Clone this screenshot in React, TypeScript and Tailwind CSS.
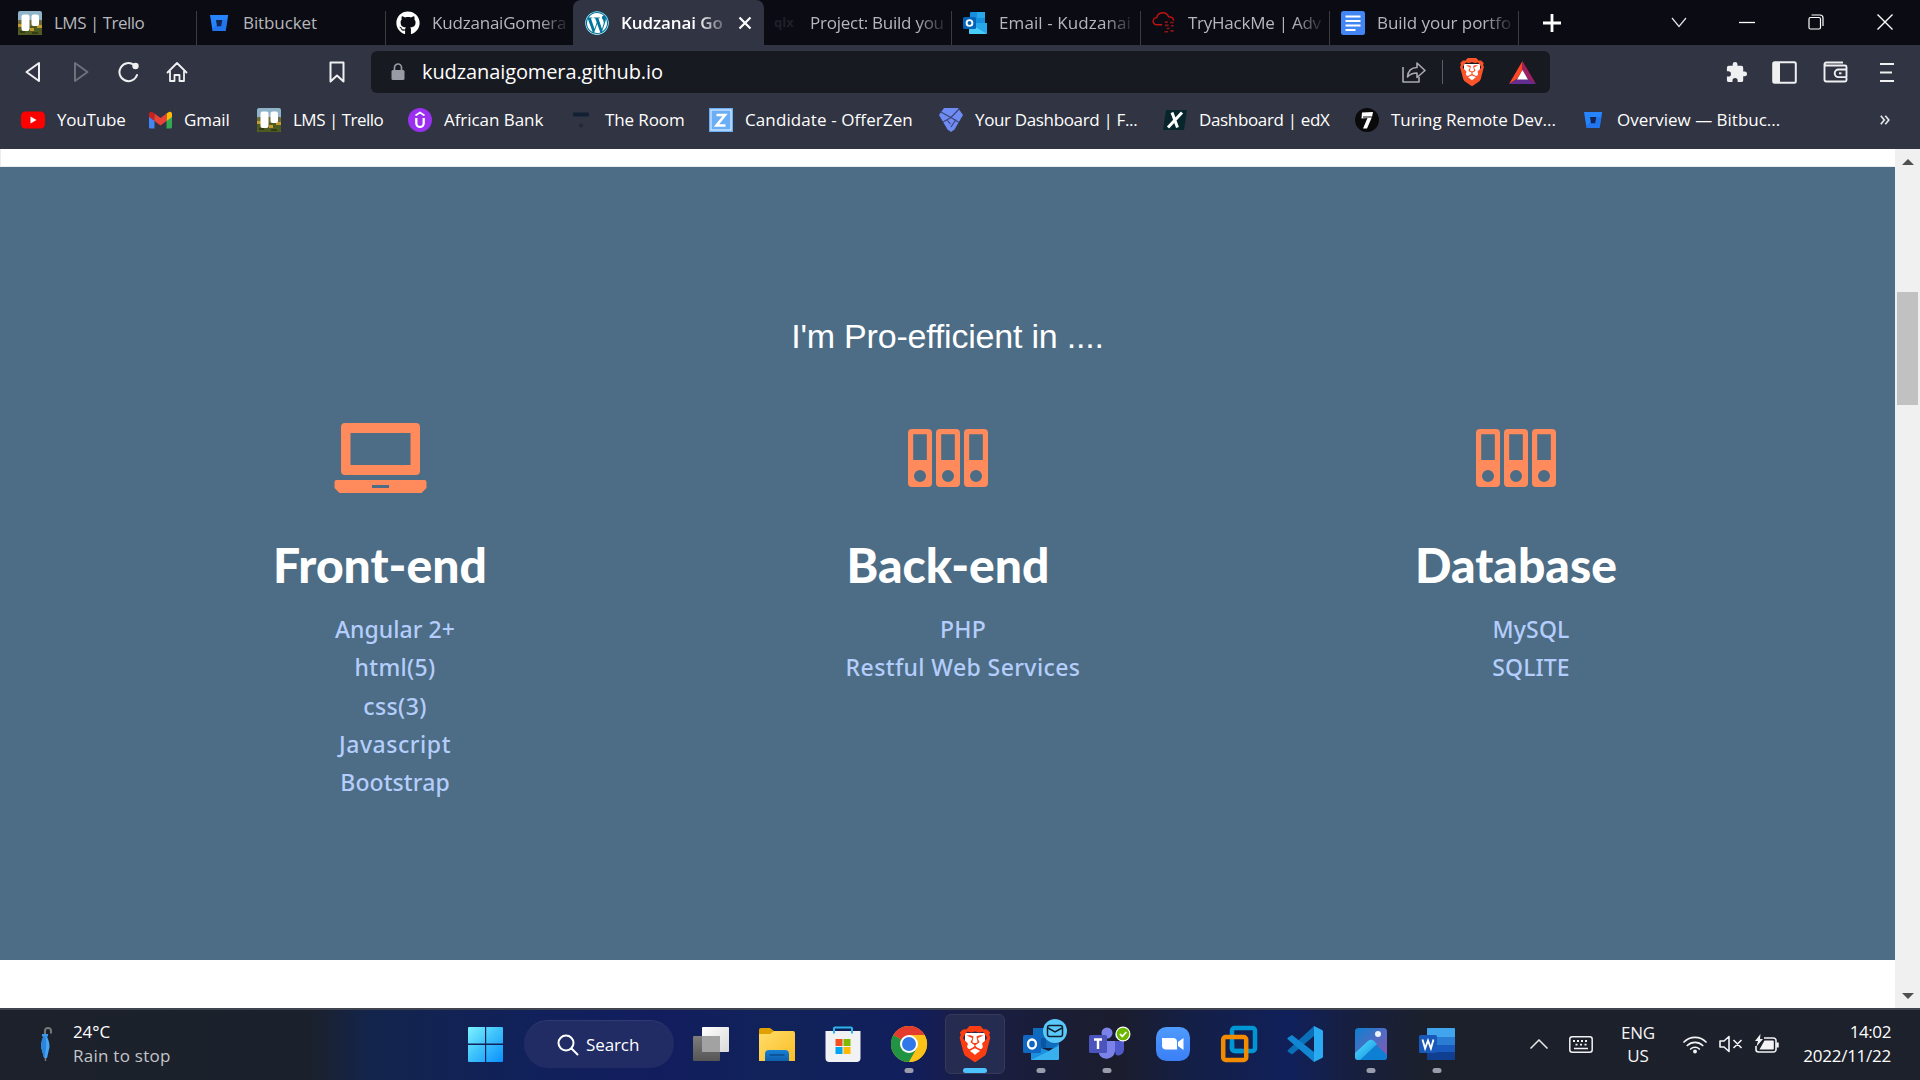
import type { ReactNode } from 'react';
import { FaGithub, FaWordpress } from 'react-icons/fa';
import { SiBrave } from 'react-icons/si';

/* ---------- site icons ---------- */

function TrelloIcon() {
  return (
    <svg width="24" height="24" viewBox="0 0 24 24">
      <rect width="24" height="24" rx="2" fill="#8fb3c8" />
      <rect y="9" width="24" height="15" rx="1" fill="#6d6a35" />
      <rect y="15" width="24" height="9" rx="2" fill="#4f5a20" />
      <path d="M0 13h5v3H0zM12 17h4v3h-4zM19 14h5v3h-5z" fill="#c49a2c" />
      <path d="M2 20h5v2H2zM14 21h6v2h-6z" fill="#313d14" />
      <rect x="3.5" y="3.5" width="8" height="16.5" rx="2" fill="#fff" />
      <rect x="13.5" y="3.5" width="7.5" height="11.5" rx="2" fill="#fff" />
    </svg>
  );
}

function BitbucketIcon() {
  return (
    <svg width="24" height="24" viewBox="0 0 24 24">
      <path d="M3 4h18.2L18.6 20H5.6z" fill="#2684ff" />
      <path d="M15 9h5.4l-1.8 11H5.6l.6-3z" fill="#1f6fe8" opacity=".7" />
      <path d="M9 9h6.2l-1 6.2H10z" fill="#12244f" />
    </svg>
  );
}

function OutlookTabIcon() {
  return (
    <svg width="24" height="24" viewBox="0 0 24 24">
      <rect x="7" y="1" width="15" height="12" rx="1" fill="#1490df" />
      <rect x="14" y="1" width="8" height="6" fill="#28a8ea" />
      <path d="M6 12h18v10a1 1 0 0 1-1 1H7a1 1 0 0 1-1-1z" fill="#28a8ea" />
      <path d="M6 12l18 11H7a1 1 0 0 1-1-1z" fill="#50d9ff" opacity=".75" />
      <rect y="6" width="13" height="12" rx="1.5" fill="#0364b8" />
      <circle cx="6.5" cy="12" r="2.9" fill="none" stroke="#fff" strokeWidth="1.9" />
    </svg>
  );
}

function TryHackMeIcon() {
  return (
    <svg width="26" height="24" viewBox="0 0 26 24" fill="none" stroke="#c11111" strokeWidth="1.6">
      <path d="M11 14H5.5a4 4 0 0 1-.4-8C6 3 9 .9 12 1c3 .1 5 1.8 6 4.200 3 0 5.200 1.600 5.500 4.200" />
      <path d="M14 11h3M19.500 11.500h4M14 14.500h4M20.500 15h3M16 18h3M13.500 21.500h4M20 20.500h3.500" stroke="#8f1414" strokeWidth="1.800" />
    </svg>
  );
}

function DocsIcon() {
  return (
    <svg width="24" height="24" viewBox="0 0 24 24">
      <rect width="24" height="24" rx="2.500" fill="#4285f4" />
      <path d="M4.500 5.500h15M4.500 10h15M4.500 14.500h15M4.500 19h10" stroke="#fff" strokeWidth="2" />
    </svg>
  );
}

function YouTubeIcon() {
  return (
    <svg width="24" height="24" viewBox="0 0 24 24">
      <rect x="0" y="3.500" width="24" height="17" rx="4.500" fill="#f00" />
      <path d="M9.500 8.500v7l6-3.500z" fill="#fff" />
    </svg>
  );
}

function GmailIcon() {
  return (
    <svg width="23" height="24" viewBox="0 0 23 24" className="ml-px">
      <path d="M0 6.500L5.500 10v10.500H1.500A1.500 1.500 0 0 1 0 19z" fill="#4285f4" />
      <path d="M23 6.500L17.500 10v10.500h4A1.500 1.500 0 0 0 23 19z" fill="#34a853" />
      <path d="M17.500 5.500l2-1.300C21 3.200 23 4 23 6v3l-5.500 4z" fill="#fbbc04" />
      <path d="M5.500 5.500l-2-1.300C2 3.200 0 4 0 6v3l5.500 4z" fill="#c5221f" />
      <path d="M5.500 5.500l6 4.500 6-4.500V13l-6 4.500-6-4.500z" fill="#ea4335" />
    </svg>
  );
}

function AfricanBankIcon() {
  return (
    <svg width="24" height="24" viewBox="0 0 24 24">
      <circle cx="12" cy="12" r="12" fill="#9b30f0" />
      <path d="M8.300 10v5.200a3.700 3.700 0 0 0 7.400 0V10" fill="none" stroke="#fff" strokeWidth="2.300" />
      <path d="M7.500 7.500L12 4.500l4.500 3" fill="none" stroke="#fff" strokeWidth="1.800" />
    </svg>
  );
}

function TheRoomIcon() {
  return (
    <svg width="24" height="24" viewBox="0 0 24 24">
      <rect x="4" y="4.500" width="16" height="4" rx="1" fill="#132033" />
      <circle cx="12" cy="17.500" r="2" fill="#1c2a3c" />
    </svg>
  );
}

function OfferZenIcon() {
  return (
    <svg width="24" height="24" viewBox="0 0 24 24">
      <rect width="24" height="24" fill="#6aaef5" />
      <rect x="2" y="2" width="20" height="20" fill="none" stroke="#d9ebff" strokeWidth="1.200" />
      <path d="M7.500 7h8.500l-8.500 10.500h9" fill="none" stroke="#fff" strokeWidth="2.600" />
    </svg>
  );
}

function DiamondIcon() {
  return (
    <svg width="24" height="24" viewBox="0 0 24 24">
      <path d="M5 0h14l5 7-8.500 14.500L12 24l-3.500-2.500L0 7z" fill="#6f8cf5" />
      <path d="M1 3.500l11 6 8.500-9M12 9.500L4 14M12 9.500l8 5M12 19l5-7.500M8 12l3.500 4" fill="none" stroke="#3c4372" strokeWidth="1.100" />
    </svg>
  );
}

function EdxIcon() {
  return (
    <svg width="24" height="24" viewBox="0 0 24 24">
      <path d="M3 2h21l-3 20H0z" fill="#06262b" />
      <path d="M9 4.500l5.500 15M19 4.500L5 19.500" stroke="#fff" strokeWidth="3" />
    </svg>
  );
}

function TuringIcon() {
  return (
    <svg width="24" height="24" viewBox="0 0 24 24">
      <circle cx="12" cy="12" r="12" fill="#0a0a0a" />
      <path d="M7 4.500l11-.5-1 5-5 11.500H8l4.500-10.500-6 .5z" fill="#fff" />
      <path d="M8 9h9" stroke="#0a0a0a" strokeWidth="1" />
    </svg>
  );
}

function BraveLion({ size, className }: { size: number; className: string }) {
  return (
    <span className={`relative flex items-center justify-center ${className}`}>
      <span className="absolute inset-x-[22%] top-[20%] bottom-[18%] rounded-b-full bg-white" />
      <SiBrave size={size} className="relative" />
    </span>
  );
}

/* ---------- browser chrome ---------- */

type Tab = { title: string; icon: ReactNode; width: string; pad: string; tracking: string; fade?: boolean; divider?: boolean };

const leftTabs: Tab[] = [
  { title: 'LMS | Trello', icon: <TrelloIcon />, width: 'w-[197px]', pad: 'pl-[18px]', tracking: 'tracking-[-0.5px]', divider: true },
  { title: 'Bitbucket', icon: <BitbucketIcon />, width: 'w-[189px]', pad: 'pl-[10px]', tracking: 'tracking-[-0.1px]', divider: true },
  { title: 'KudzanaiGomera', icon: <FaGithub size={24} color="#fff" />, width: 'w-[187px]', pad: 'pl-[10px]', tracking: 'tracking-[-0.2px]', fade: true },
];

const rightTabs: Tab[] = [
  {
    title: 'Project: Build you',
    icon: <span className="w-6 text-[13px] font-bold text-[#1c2129]">qlx</span>,
    width: 'w-[188px]', pad: 'pl-[10px]', tracking: 'tracking-[-0.25px]', fade: true, divider: true,
  },
  { title: 'Email - Kudzanai', icon: <OutlookTabIcon />, width: 'w-[189px]', pad: 'pl-[11px]', tracking: 'tracking-[0.1px]', fade: true, divider: true },
  { title: 'TryHackMe | Adv', icon: <TryHackMeIcon />, width: 'w-[189px]', pad: 'pl-[11px]', tracking: 'tracking-[-0.25px]', fade: true, divider: true },
  { title: 'Build your portfo', icon: <DocsIcon />, width: 'w-[189px]', pad: 'pl-[11px]', tracking: 'tracking-[-0.05px]', fade: true, divider: true },
];

function TabItem({ tab }: { tab: Tab }) {
  return (
    <div className={`flex h-full shrink-0 ${tab.width}`}>
      <div className={`flex min-w-0 flex-1 items-center gap-3 ${tab.pad}`}>
        <span className="flex w-6 shrink-0 justify-center">{tab.icon}</span>
        <span
          className={`whitespace-nowrap text-[17px] leading-6 text-[#b6b7bb] ${tab.tracking} ${
            tab.fade ? '[mask-image:linear-gradient(to_right,black_80%,rgba(0,0,0,0.15)_100%)]' : ''
          }`}
        >
          {tab.title}
        </span>
      </div>
      {tab.divider && <div className="mt-[11px] w-px bg-[#3b3c42]" />}
    </div>
  );
}

function TabStrip() {
  return (
    <div className="flex h-[45px] bg-[#0b0b14]">
      {leftTabs.map((t) => <TabItem key={t.title} tab={t} />)}
      <div className="flex h-full w-[191px] shrink-0 items-center rounded-t-lg bg-[#313442] pl-3">
        <span className="rounded-full bg-[#00749c]"><FaWordpress size={24} color="#fff" /></span>
        <span className="ml-3 w-[106px] whitespace-nowrap text-[17px] font-semibold leading-6 tracking-[-0.1px] text-white [mask-image:linear-gradient(to_right,black_72%,rgba(0,0,0,0.15)_100%)]">
          Kudzanai Go
        </span>
        <svg width="14" height="14" viewBox="0 0 14 14" className="ml-[11px]">
          <path d="M1.500 1.500l11 11M12.500 1.500l-11 11" stroke="#fff" strokeWidth="2.200" />
        </svg>
      </div>
      {rightTabs.map((t) => <TabItem key={t.title} tab={t} />)}
      <div className="flex flex-1 items-center pl-[24px]">
        <svg width="18" height="18" viewBox="0 0 18 18"><path d="M9 0v18M0 9h18" stroke="#fff" strokeWidth="2.800" /></svg>
        <svg width="16" height="11" viewBox="0 0 16 11" className="ml-[110px] -mt-px" fill="none" stroke="#e4e4e6" strokeWidth="1.200"><path d="M1 1l7 8.500L15 1" /></svg>
        <svg width="16" height="3" viewBox="0 0 16 3" className="ml-[52px] -mt-px"><path d="M0 1.500h16" stroke="#fff" strokeWidth="1.300" /></svg>
        <svg width="16" height="16" viewBox="0 0 16 16" className="ml-[53px] -mt-px" fill="none" stroke="#fff" strokeWidth="1.200">
          <rect x="1" y="3.500" width="11.500" height="11.500" rx="1.500" /><path d="M3.500 1h8.500a3 3 0 0 1 3 3v8" />
        </svg>
        <svg width="16" height="16" viewBox="0 0 16 16" className="ml-[53px] -mt-px"><path d="M.5.500l15 15M15.500.500l-15 15" stroke="#fff" strokeWidth="1.400" /></svg>
      </div>
    </div>
  );
}

function Toolbar() {
  return (
    <div className="flex h-[54px] items-center">
      <div className="flex w-[371px] shrink-0 items-center pl-[9px]">
        <span className="flex w-12 justify-center">
          <svg width="18" height="22" viewBox="0 0 18 22" fill="none" stroke="#f0f0f2" strokeWidth="2" strokeLinejoin="round"><path d="M15 2v18L2.500 11z" /></svg>
        </span>
        <span className="flex w-12 justify-center">
          <svg width="18" height="22" viewBox="0 0 18 22" fill="none" stroke="#6e707b" strokeWidth="2" strokeLinejoin="round"><path d="M3 2v18l12.500-9z" /></svg>
        </span>
        <span className="flex w-12 justify-center">
          <svg width="22" height="22" viewBox="0 0 22 22" fill="none" stroke="#f0f0f2" strokeWidth="2" strokeLinecap="round">
            <path d="M19 14a9 9 0 1 1-3-10" /><circle cx="17.500" cy="5" r="3.200" fill="#f0f0f2" stroke="none" />
          </svg>
        </span>
        <span className="flex w-12 justify-center">
          <svg width="22" height="22" viewBox="0 0 22 22" fill="none" stroke="#f0f0f2" strokeWidth="1.800" strokeLinejoin="round" strokeLinecap="round">
            <path d="M1.500 11.500L11 2l9.500 9.500M4 10v10h4.500v-6h5v6H18V10" />
          </svg>
        </span>
        <svg width="16" height="22" viewBox="0 0 16 22" className="ml-[128px]" fill="none" stroke="#f0f0f2" strokeWidth="2" strokeLinejoin="round">
          <path d="M1.500 1.500h13v19L8 14.500l-6.500 6z" />
        </svg>
      </div>
      <div className="flex h-[42px] w-[1179px] shrink-0 items-center rounded-md bg-[#181a21] pl-[20px]">
        <svg width="14" height="18" viewBox="0 0 14 18"><rect x=".5" y="7" width="13" height="10" rx="1.500" fill="#989ba3" /><path d="M3.500 7V4.500a3.500 3.500 0 0 1 7 0V7" fill="none" stroke="#989ba3" strokeWidth="1.700" /></svg>
        <span className="ml-[17px] flex-1 text-[20px] leading-7 tracking-[-0.1px] text-white">kudzanaigomera.github.io</span>
        <svg width="24" height="22" viewBox="0 0 24 22" fill="none" stroke="#a9aab0" strokeWidth="1.600" strokeLinejoin="round">
          <path d="M1 6v15h16v-5" /><path d="M5.500 16c.5-6 4-9.500 9.500-9.500V2l8 7.500-8 7v-4.500c-4 0-7 1-9.500 4z" />
        </svg>
        <div className="ml-[16px] h-6 w-[1.500px] bg-[#5c5e67]" />
        <BraveLion size={28} className="ml-[15px] h-7 w-7 text-[#fb542b]" />
        <svg width="27" height="23" viewBox="0 0 27 23" className="mr-[14px] ml-[23px]">
          <path d="M13.500 0L0 23l8-5 5.500-9z" fill="#ff4724" /><path d="M13.500 0L27 23l-8-5-5.500-9z" fill="#9e1f63" /><path d="M0 23h27l-8-5H8z" fill="#662d91" /><path d="M13.500 9L8 18.500h11z" fill="#fff" />
        </svg>
      </div>
      <div className="flex flex-1 items-center pl-[175px]">
        <svg width="23" height="23" viewBox="0 0 24 24" fill="#f0f0f2">
          <path d="M20.500 11H19V7a2 2 0 0 0-2-2h-4V3.500a2.500 2.500 0 0 0-5 0V5H4a2 2 0 0 0-2 2v3.800h1.500a2.700 2.700 0 0 1 0 5.400H2V20a2 2 0 0 0 2 2h3.800v-1.500a2.700 2.700 0 0 1 5.400 0V22H17a2 2 0 0 0 2-2v-4h1.500a2.500 2.500 0 0 0 0-5z" />
        </svg>
        <svg width="25" height="23" viewBox="0 0 25 23" className="ml-[24px]"><rect x="1.200" y="1.200" width="22.600" height="20.600" rx="1.500" fill="none" stroke="#f0f0f2" strokeWidth="2" /><path d="M2 2h6v19H2z" fill="#f0f0f2" /></svg>
        <svg width="25" height="22" viewBox="0 0 25 22" className="ml-[26px]" fill="none" stroke="#f0f0f2" strokeWidth="1.900" strokeLinejoin="round">
          <path d="M23.500 8V6a1.500 1.500 0 0 0-1.500-1.500H3.500a2 2 0 0 1-2-1.500 2 2 0 0 1 2-1.500H20M1.500 3v15.500A2 2 0 0 0 3.500 20.500H22a1.500 1.500 0 0 0 1.500-1.500v-2" />
          <path d="M23.500 8.500h-8a3.800 3.800 0 0 0 0 7.600h8z" /><path d="M16 12.300h2.500" />
        </svg>
        <svg width="14" height="21" viewBox="0 0 14 21" className="ml-[32px]"><path d="M0 2h14M0 10.500h12M0 19h14" stroke="#f0f0f2" strokeWidth="2" /></svg>
      </div>
    </div>
  );
}

const bookmarks = [
  { label: 'YouTube', icon: <YouTubeIcon />, width: 'w-[127px]', tracking: 'tracking-[-0.2px]' },
  { label: 'Gmail', icon: <GmailIcon />, width: 'w-[109px]', tracking: 'tracking-[-0.1px]' },
  { label: 'LMS | Trello', icon: <TrelloIcon />, width: 'w-[151px]', tracking: 'tracking-[-0.5px]' },
  { label: 'African Bank', icon: <AfricanBankIcon />, width: 'w-[161px]', tracking: 'tracking-[-0.05px]' },
  { label: 'The Room', icon: <TheRoomIcon />, width: 'w-[140px]', tracking: 'tracking-[-0.1px]' },
  { label: 'Candidate - OfferZen', icon: <OfferZenIcon />, width: 'w-[230px]', tracking: 'tracking-[0.1px]' },
  { label: 'Your Dashboard | F...', icon: <DiamondIcon />, width: 'w-[224px]', tracking: 'tracking-[-0.35px]' },
  { label: 'Dashboard | edX', icon: <EdxIcon />, width: 'w-[192px]', tracking: 'tracking-[-0.35px]' },
  { label: 'Turing Remote Dev...', icon: <TuringIcon />, width: 'w-[226px]', tracking: 'tracking-normal' },
  { label: 'Overview — Bitbuc...', icon: <BitbucketIcon />, width: 'w-[220px]', tracking: 'tracking-normal' },
];

function BookmarksBar() {
  return (
    <div className="flex h-[50px] items-center pb-2 pl-[21px]">
      {bookmarks.map((b) => (
        <div key={b.label} className={`flex shrink-0 items-center gap-3 whitespace-nowrap ${b.width}`}>
          <span className="flex w-6 shrink-0">{b.icon}</span>
          <span className={`text-[17px] leading-6 text-white ${b.tracking}`}>{b.label}</span>
        </div>
      ))}
      <svg width="10" height="10" viewBox="0 0 10 10" className="mr-[30px] ml-auto" fill="none" stroke="#e6e6ea" strokeWidth="1.700">
        <path d="M.8.800L4.300 5 .8 9.200M5.300.800L8.800 5l-3.500 4.200" />
      </svg>
    </div>
  );
}

/* ---------- page ---------- */

function LaptopIcon() {
  return (
    <svg width="93" height="70" viewBox="0 0 93 70" fill="#ff8a5b">
      <path fillRule="evenodd" d="M11 0h71a4 4 0 0 1 4 4v44a4 4 0 0 1-4 4H11a4 4 0 0 1-4-4V4a4 4 0 0 1 4-4zM16.500 10v32h60V10z" />
      <path fillRule="evenodd" d="M2.500 57h88a2 2 0 0 1 2 2v6l-5 5h-82l-5-5v-6a2 2 0 0 1 2-2zM38 62v3h17v-3z" />
    </svg>
  );
}

const binder =
  'M4 0h16a4 4 0 0 1 4 4v50a4 4 0 0 1-4 4H4a4 4 0 0 1-4-4V4a4 4 0 0 1 4-4zM5.200 5.200V31h13.600V5.200zM12 41a6 6 0 1 0 0 12a6 6 0 1 0 0-12z';

function BindersIcon() {
  return (
    <svg width="80" height="58" viewBox="0 0 80 58" fill="#ff8a5b" fillRule="evenodd">
      <path d={binder} />
      <path d={binder} transform="translate(28 0)" />
      <path d={binder} transform="translate(56 0)" />
    </svg>
  );
}

type Skill = { name: string; tracking: string };

const groups: { title: string; icon: ReactNode; skills: Skill[] }[] = [
  {
    title: 'Front-end',
    icon: <LaptopIcon />,
    skills: [
      { name: 'Angular 2+', tracking: 'tracking-[0.05px]' },
      { name: 'html(5)', tracking: 'tracking-[0.3px]' },
      { name: 'css(3)', tracking: 'tracking-[0.4px]' },
      { name: 'Javascript', tracking: 'tracking-[0.55px]' },
      { name: 'Bootstrap', tracking: 'tracking-[0.1px]' },
    ],
  },
  {
    title: 'Back-end',
    icon: <BindersIcon />,
    skills: [
      { name: 'PHP', tracking: 'tracking-[0.3px]' },
      { name: 'Restful Web Services', tracking: 'tracking-[0.4px]' },
    ],
  },
  {
    title: 'Database',
    icon: <BindersIcon />,
    skills: [
      { name: 'MySQL', tracking: 'tracking-[0.2px]' },
      { name: 'SQLITE', tracking: 'tracking-[0.1px]' },
    ],
  },
];

function Page() {
  return (
    <main className="flex h-[859px] bg-white">
      <div className="flex flex-1 flex-col">
        <div className="h-[18px] border-b border-l border-[#ececec]" />
        <section className="h-[793px] bg-[#4c6d85] pt-[149px]">
          <h2 className="text-center font-['Liberation_Sans',sans-serif] text-[34px] leading-10 tracking-[-0.2px] text-white">
            I'm Pro-efficient in ....
          </h2>
          <div className="mr-[95px] ml-[96px] mt-[57px] grid grid-cols-3 text-center">
            {groups.map((g) => (
              <div key={g.title}>
                <div className="flex h-[90px] items-center justify-center">{g.icon}</div>
                <h3 className="mt-[33px] font-['Lato',sans-serif] text-[48px] font-black leading-[58px] text-white">{g.title}</h3>
                <ul className="mt-[16px] pl-[30px]">
                  {g.skills.map((s) => (
                    <li key={s.name} className={`font-['Noto_Sans',sans-serif] text-[23px] font-medium leading-[38.3px] text-[#b5cdfc] ${s.tracking}`}>
                      {s.name}
                    </li>
                  ))}
                </ul>
              </div>
            ))}
          </div>
        </section>
      </div>
      <div className="flex w-[25px] flex-col items-center bg-[#f0f0f0]">
        <svg width="12" height="6" viewBox="0 0 12 6" className="mt-[10px]"><path d="M0 6l6-6 6 6z" fill="#505050" /></svg>
        <div className="mt-[127px] h-[113px] w-[21px] bg-[#c1c1c1]" />
        <svg width="12" height="6" viewBox="0 0 12 6" className="mt-auto mb-[9px]"><path d="M0 0l6 6 6-6z" fill="#505050" /></svg>
      </div>
    </main>
  );
}

/* ---------- taskbar ---------- */

function Dot() {
  return <rect x="28.500" y="58" width="9" height="5" rx="2.500" fill="#9a9cac" />;
}

function Slot({ children }: { children: ReactNode }) {
  return <svg width="66" height="68" viewBox="0 0 66 68" className="shrink-0">{children}</svg>;
}

function TaskbarApps() {
  return (
    <div className="flex">
      <Slot>
        <defs>
          <linearGradient id="tv1" x2="1" y2="1"><stop stopColor="#fff" /><stop offset="1" stopColor="#d9d9d9" /></linearGradient>
          <linearGradient id="tv2" x2="0" y2="1"><stop stopColor="#7d7d7d" /><stop offset="1" stopColor="#555" /></linearGradient>
        </defs>
        <rect x="24" y="17" width="27" height="25" rx="1" fill="url(#tv1)" />
        <rect x="15" y="26" width="27" height="25" rx="1" fill="url(#tv2)" />
        <path d="M24 26h18v16H24z" fill="#a2a2a2" />
      </Slot>
      <Slot>
        <defs>
          <linearGradient id="fe" x2="1" y2="1"><stop stopColor="#ffdd6b" /><stop offset="1" stopColor="#fbbd25" /></linearGradient>
          <linearGradient id="fb" x2="0" y2="1"><stop stopColor="#1681d6" /><stop offset="1" stopColor="#0f5fae" /></linearGradient>
        </defs>
        <path d="M15 20a2 2 0 0 1 2-2h9l4 3-2 5H15z" fill="#dfa000" />
        <path d="M15 24h11l4-3h19a2 2 0 0 1 2 2v28H15z" fill="url(#fe)" />
        <path d="M21 51v-7a4 4 0 0 1 4-4h16a4 4 0 0 1 4 4v7z" fill="url(#fb)" />
        <path d="M26 45h14" stroke="#0c4c8c" strokeWidth="1.500" strokeLinecap="round" />
      </Slot>
      <Slot>
        <path d="M24 23v-4.500a.9.900 0 0 1 .9-.9h16.200a.9.900 0 0 1 .9.900V23" fill="none" stroke="#2cb5ea" strokeWidth="2" />
        <path d="M15.500 21h35v27a4 4 0 0 1-4 4h-27a4 4 0 0 1-4-4z" fill="#f1f2f4" />
        <path d="M24 21v2.500M42 21v2.500" stroke="#2cb5ea" strokeWidth="2" />
        <path d="M25.500 29h7v7h-7z" fill="#f25022" /><path d="M33.500 29h7v7h-7z" fill="#7fba00" />
        <path d="M25.500 37h7v7h-7z" fill="#00a4ef" /><path d="M33.500 37h7v7h-7z" fill="#ffb900" />
      </Slot>
      <Slot>
        <circle cx="33" cy="34" r="18" fill="#fbc116" />
        <path d="M33 34L17.400 25a18 18 0 0 1 31.200 0z" fill="#e33b2e" />
        <path d="M33 34l7.800 4.500L33 52A18 18 0 0 1 17.400 25z" fill="#229342" />
        <path d="M33 25h15.600A18 18 0 0 1 33 52l7.800-13.500z" fill="#fbc116" />
        <circle cx="33" cy="34" r="9" fill="#fff" /><circle cx="33" cy="34" r="7" fill="#3077ea" />
        <Dot />
      </Slot>
      <div className="flex w-[66px] items-start justify-center pt-1">
        <div className="flex h-[60px] w-[60px] flex-col items-center rounded-md border border-[#353a5c] bg-[#262b50]">
          <BraveLion size={36} className="mt-[11px] h-9 w-9 text-[#fb3d14]" />
          <div className="mt-[6px] h-[5px] w-6 rounded-full bg-[#4cc2ff]" />
        </div>
      </div>
      <Slot>
        <path d="M25 18h26v20H25z" fill="#0f6cbd" /><path d="M38 18h13v10H38z" fill="#28a8ea" />
        <path d="M25 28h13v10H25z" fill="#0a56a0" />
        <path d="M23 34l18 7 10-7v14a2 2 0 0 1-2 2H23z" fill="#1b8fe0" /><path d="M23 50l28-14v13l-1 1z" fill="#38b0ee" />
        <rect x="15" y="25" width="18" height="18" rx="1.500" fill="#1066c0" />
        <ellipse cx="24" cy="34" rx="4" ry="4.500" fill="none" stroke="#fff" strokeWidth="2.300" />
        <circle cx="47" cy="21" r="12" fill="#5ac8fa" />
        <rect x="39.500" y="15.500" width="15" height="11" rx="2" fill="none" stroke="#10202c" strokeWidth="1.500" />
        <path d="M40 18l7 4 7-4" fill="none" stroke="#10202c" strokeWidth="1.500" />
        <Dot />
      </Slot>
      <Slot>
        <circle cx="33" cy="23" r="5.500" fill="#7b83eb" /><circle cx="45" cy="25" r="4" fill="#5059c9" />
        <path d="M38 31h12v9a6 6 0 0 1-8 5z" fill="#5059c9" />
        <path d="M25 31h16v10a8.500 8.500 0 0 1-16 3z" fill="#7b83eb" />
        <rect x="15" y="25" width="18" height="18" rx="1.500" fill="#4b53bc" />
        <path d="M20 29.500h8M24 29.500v9.500" stroke="#fff" strokeWidth="2.400" />
        <circle cx="49" cy="24" r="7.500" fill="#fff" /><circle cx="49" cy="24" r="6.300" fill="#6bb700" />
        <path d="M46 24l2.300 2.500 4-4.500" fill="none" stroke="#fff" strokeWidth="1.800" />
        <Dot />
      </Slot>
      <Slot>
        <defs><linearGradient id="zm" x2="0" y2="1"><stop stopColor="#4f9bff" /><stop offset="1" stopColor="#3b7ff5" /></linearGradient></defs>
        <rect x="16" y="17" width="34" height="34" rx="10.500" fill="url(#zm)" />
        <path d="M22 28h11a4 4 0 0 1 4 4v7.500H26a4 4 0 0 1-4-4z" fill="#fff" /><path d="M38 32l5.500-4v12l-5.500-4z" fill="#fff" />
      </Slot>
      <Slot>
        <rect x="26" y="18" width="23" height="23" rx="2.500" fill="none" stroke="#0095d3" strokeWidth="4.500" />
        <rect x="17.200" y="27" width="23" height="23" rx="2.500" fill="none" stroke="#f38b00" strokeWidth="4.500" />
        <path d="M26 33v5.500a2.500 2.500 0 0 0 2.500 2.500H36" fill="none" stroke="#0095d3" strokeWidth="4.500" />
      </Slot>
      <Slot>
        <path d="M42 16v10L20 44.500l-4-2.700a1.200 1.200 0 0 1 0-1.800z" fill="#0a6fb8" />
        <path d="M42 52V42L20 25l-4 2.500a1.200 1.200 0 0 0 0 2z" fill="#1186d2" />
        <path d="M42 16l8 4a1.800 1.800 0 0 1 1 1.500v25a1.800 1.800 0 0 1-1 1.500l-8 4z" fill="#2aaaf0" />
      </Slot>
      <Slot>
        <defs>
          <linearGradient id="ph" x2="1" y2="1"><stop stopColor="#0c80d0" /><stop offset=".6" stopColor="#5b68c0" /><stop offset="1" stopColor="#8a55b5" /></linearGradient>
          <linearGradient id="pm" x2="1" y2="1"><stop stopColor="#50e0ff" /><stop offset="1" stopColor="#1590e0" /></linearGradient>
        </defs>
        <rect x="17" y="18" width="32" height="32" rx="3.500" fill="url(#ph)" />
        <circle cx="40" cy="24" r="3" fill="#eef3fa" />
        <path d="M20 50l16-17 13 12v2a3 3 0 0 1-3 3z" fill="#0d80d4" />
        <path d="M17 43l13-12q3-2.500 6 0l3 3L22 50h-2a3 3 0 0 1-3-3z" fill="url(#pm)" />
        <Dot />
      </Slot>
      <Slot>
        <path d="M23 19a1 1 0 0 1 1-1h26a1 1 0 0 1 1 1v8H23z" fill="#41a5ee" /><path d="M23 27h28v8H23z" fill="#2b7cd3" />
        <path d="M23 35h28v7H23z" fill="#185abd" /><path d="M23 42h28v7a1 1 0 0 1-1 1H24a1 1 0 0 1-1-1z" fill="#103f91" />
        <rect x="15" y="25" width="18" height="18" rx="1.500" fill="#1858b8" />
        <path d="M18.500 29.500l2.600 9L24 30.500l2.900 8 2.600-9" fill="none" stroke="#fff" strokeWidth="1.900" />
        <Dot />
      </Slot>
    </div>
  );
}

function Taskbar() {
  return (
    <footer className="h-[72px] border-t-2 border-[#40444f] bg-[linear-gradient(90deg,#1c212b_0px,#1b212c_310px,#13244c_370px,#11215a_520px,#121d5e_660px,#11235a_780px,#111e5c_910px,#191e48_960px,#1a1d38_1040px,#1b1d2d_1120px,#141f46_1190px,#10205a_1290px,#171f40_1350px,#1c202b_1430px,#1c212b_1920px)]">
      <div className="flex h-[68px] items-center whitespace-nowrap text-[17px] leading-6 text-white">
        <div className="flex w-[468px] items-center pl-[38px]">
          <svg width="16" height="36" viewBox="0 0 16 36">
            <path d="M7 9V5a3 3 0 0 1 6 0v2.500" fill="none" stroke="#767676" strokeWidth="2" />
            <path d="M7 8c3 3.500 4.500 8 4.500 13L9 32H6L3 21C3 16 4.500 11 7 8z" fill="#48a5f5" />
            <path d="M7 8c1 4 1.500 9 1 14l-1.500 11L3 21C3 16 4.500 11 7 8z" fill="#2c84dc" />
            <path d="M7.500 32v3" stroke="#777" strokeWidth="1.500" /><path d="M4 8h6v2.500H4z" fill="#3a98ec" />
          </svg>
          <div className="ml-[19px]">
            <div className="tracking-[-0.1px]">24°C</div>
            <div className="tracking-[0.25px] text-[#c3c5c9]">Rain to stop</div>
          </div>
        </div>
        <svg width="35" height="35" viewBox="0 0 35 35">
          <defs><linearGradient id="win" x1="0" y1="0" x2="35" y2="35" gradientUnits="userSpaceOnUse"><stop stopColor="#7df3ff" /><stop offset=".5" stopColor="#3cc0fb" /><stop offset="1" stopColor="#0a90ff" /></linearGradient></defs>
          <path d="M1 0h16v16.500H0V1a1 1 0 0 1 1-1zM18.200 0H34a1 1 0 0 1 1 1v15.500H18.200zM0 18h17v17H1a1 1 0 0 1-1-1zM18.200 18H35v16a1 1 0 0 1-1 1H18.200z" fill="url(#win)" />
        </svg>
        <div className="ml-[21px] flex h-12 w-[150px] items-center rounded-full border-t border-[#2e3a72] bg-[#212b64] pl-[33px]">
          <svg width="22" height="22" viewBox="0 0 22 22" fill="none" stroke="#fff" strokeWidth="2" strokeLinecap="round"><circle cx="9" cy="9" r="7.500" /><path d="M14.500 14.500l6 6" /></svg>
          <span className="ml-[7px] tracking-[-0.1px]">Search</span>
        </div>
        <div className="ml-1"><TaskbarApps /></div>
        <svg width="18" height="10" viewBox="0 0 18 10" className="ml-[60px]" fill="none" stroke="#e8e8ea" strokeWidth="1.500"><path d="M.5 9.500L9 1l8.500 8.500" /></svg>
        <svg width="24" height="17" viewBox="0 0 24 17" className="ml-[21px]" fill="none" stroke="#f2f2f4" strokeWidth="1.500">
          <rect x=".8" y=".8" width="22.400" height="15.400" rx="2.500" /><path d="M4 5h2M8 5h2M12 5h2M16 5h2M6.500 8.700h2M11 8.700h2M15.500 8.700h2" strokeWidth="1.800" /><path d="M5 12.500h14" />
        </svg>
        <div className="ml-[28px] text-center leading-[23px] text-[#f4f4f6]">
          <div className="tracking-[-0.2px]">ENG</div>
          <div className="tracking-[-0.2px]">US</div>
        </div>
        <svg width="24" height="19" viewBox="0 0 24 19" className="ml-[28px]" fill="none" stroke="#f4f4f6" strokeWidth="1.700" strokeLinecap="round">
          <path d="M1 7a15.500 15.500 0 0 1 22 0M4.300 10.500a11 11 0 0 1 15.400 0M7.700 14a6.200 6.200 0 0 1 8.600 0" /><circle cx="12" cy="16.500" r="1.900" fill="#f4f4f6" stroke="none" />
        </svg>
        <svg width="24" height="18" viewBox="0 0 24 18" className="ml-3" fill="none" stroke="#f4f4f6" strokeWidth="1.600" strokeLinejoin="round">
          <path d="M1 6v6h4l5 4.500v-15L5 6zM14.500 5l8 8M22.500 5l-8 8" />
        </svg>
        <svg width="24" height="20" viewBox="0 0 24 20" className="ml-3" fill="none" stroke="#f4f4f6" strokeWidth="1.600">
          <path d="M9 4h9.500a2.500 2.500 0 0 1 2.500 2.500v9a2.500 2.500 0 0 1-2.500 2.500H3.500A2.500 2.500 0 0 1 1 15.500V12" />
          <path d="M9.500 6.500H18a.8.800 0 0 1 .8.800v7.400a.8.800 0 0 1-.8.800H4.500z" fill="#f4f4f6" stroke="none" />
          <path d="M5.500 0L0 7h3l-1.500 5.500L8 5H5z" fill="#f4f4f6" stroke="none" /><path d="M22.500 8.500v5" strokeWidth="2.500" />
        </svg>
        <div className="mr-[29px] ml-auto text-right">
          <div className="tracking-[-0.4px]">14:02</div>
          <div className="tracking-[-0.25px]">2022/11/22</div>
        </div>
      </div>
    </footer>
  );
}

export default function App() {
  return (
    <div className="flex h-[1080px] w-[1920px] flex-col overflow-hidden font-['Open_Sans',sans-serif]">
      <header className="h-[149px] bg-[#313442]">
        <TabStrip />
        <Toolbar />
        <BookmarksBar />
      </header>
      <Page />
      <Taskbar />
    </div>
  );
}
